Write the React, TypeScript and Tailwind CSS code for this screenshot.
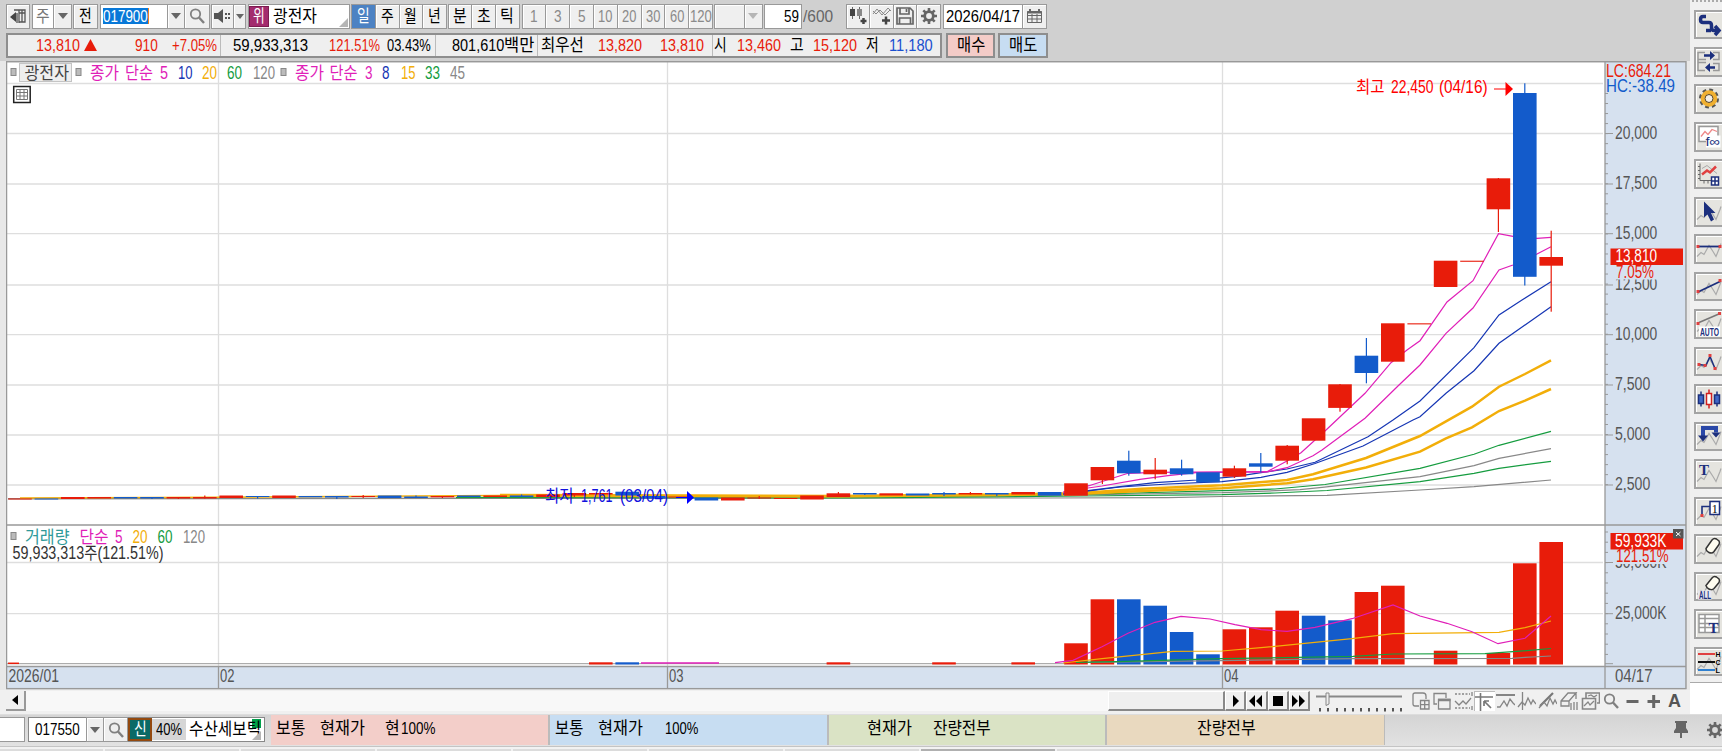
import { useLayoutEffect, useRef, type ReactNode } from "react";

const RED = "#e81c0a";
const BLUE = "#135bcb";
const MAGENTA = "#e01fb8";
const ORANGE = "#f2ae09";
const GREEN = "#159c3f";
const GRAY = "#888888";
const NAVY = "#1636b4";

/* Condenses a label to the width of the narrow HTS system font */
function Fit({ w, className = "", children }: { w: number; className?: string; children: string }) {
  const ref = useRef<HTMLSpanElement>(null);

  useLayoutEffect(() => {
    const el = ref.current;
    if (el) el.style.transform = `scaleX(${w / el.offsetWidth})`;
  }, [w, children]);

  return (
    <span className={`block shrink-0 text-[17px] leading-none ${className}`} style={{ width: w }}>
      <span ref={ref} className="inline-block origin-left whitespace-pre leading-none">
        {children}
      </span>
    </span>
  );
}

function Box({ className = "", children }: { className?: string; children?: ReactNode }) {
  return (
    <div
      className={`flex h-[25px] shrink-0 items-center justify-center overflow-hidden border border-[#999] bg-[#efefef] shadow-[inset_1px_1px_0_#fff] ${className}`}
    >
      {children}
    </div>
  );
}

function Caret({ light = false }: { light?: boolean }) {
  return (
    <svg width="10" height="6" viewBox="0 0 10 6" className="shrink-0">
      <path d="M0 0H10L5 6Z" fill={light ? "#b5b5b5" : "#666"} />
    </svg>
  );
}

function Lens() {
  return (
    <svg width="16" height="16" viewBox="0 0 16 16" fill="none" stroke="#808080" className="shrink-0">
      <circle cx="6.5" cy="6" r="4.7" strokeWidth="1.8" />
      <path d="M10 9.5L15 15" strokeWidth="2.4" />
    </svg>
  );
}

function Gear({ className = "" }: { className?: string }) {
  return (
    <svg width="16" height="16" viewBox="0 0 16 16" fill="none" stroke="#666" className={`shrink-0 ${className}`}>
      <circle cx="8" cy="8" r="4.300" strokeWidth="2.800" />
      <path d="M8 0V3M8 13V16M0 8H3M13 8H16M2.300 2.300L4.400 4.400M11.600 11.600L13.700 13.700M2.300 13.700L4.400 11.600M11.600 4.400L13.700 2.300" strokeWidth="2.600" />
    </svg>
  );
}

const periods = ["일", "주", "월", "년"];
const intraday = ["분", "초", "틱"];
const minutes = ["1", "3", "5", "10", "20", "30", "60", "120"];

function Toolbar() {
  return (
    <div className="flex h-[25px] items-center">
      <Box className="w-[24px]">
        <svg width="16" height="16" viewBox="0 0 16 16">
          <path d="M4 2H15V14H9M9 2V15M9 5H15M12 2V14" fill="none" stroke="#555" strokeWidth="1.3" />
          <path d="M6 4V14L0 9Z" fill="#444" />
          <path d="M7 5V15" stroke="#888" strokeWidth="2" />
        </svg>
      </Box>
      <Box className="ml-[2px] w-[22px] bg-white text-[#777]"><Fit w={14}>주</Fit></Box>
      <Box className="-ml-px w-[19px]"><Caret /></Box>
      <Box className="ml-px w-[25px]"><Fit w={13}>전</Fit></Box>
      <Box className="ml-[2px] w-[68px] justify-start bg-white pl-[2px]">
        <span className="flex h-[16px] items-center border-r border-[#f08020] bg-[#0878d8] text-white">
          <Fit w={45}>017900</Fit>
        </span>
      </Box>
      <Box className="-ml-px w-[18px]"><Caret /></Box>
      <Box className="-ml-px w-[26px]"><Lens /></Box>
      <Box className="ml-[1px] w-[23px]">
        <svg width="17" height="14" viewBox="0 0 17 14" fill="#555">
          <path d="M0 4H4L9 0V14L4 10H0Z" />
          <path d="M11 4h2v2h-2zM11 8h2v2h-2zM14 4h2v2h-2zM14 8h2v2h-2z" />
        </svg>
      </Box>
      <Box className="-ml-px w-[13px]">
        <svg width="8" height="5" viewBox="0 0 8 5"><path d="M0 0H8L4 5Z" fill="#666" /></svg>
      </Box>
      <Box className="relative ml-[2px] w-[102px] justify-start bg-white">
        <span className="flex h-[21px] w-[20px] shrink-0 items-center justify-center border border-[#7d1d50] bg-[#a32c6e] text-white">
          <Fit w={12}>위</Fit>
        </span>
        <Fit w={44} className="ml-[4px]">광전자</Fit>
        <svg width="9" height="9" viewBox="0 0 9 9" className="absolute right-[1px] bottom-[1px]">
          <path d="M9 0V9H0Z" fill="#b5b5b5" />
        </svg>
      </Box>
      <div className="ml-[1px] flex">
        {periods.map((p, i) => (
          <Box key={p} className={i === 0 ? "w-[25px] !bg-[#4c82c3] text-white !shadow-none" : "-ml-px w-[24.6px]"}>
            <Fit w={13}>{p}</Fit>
          </Box>
        ))}
      </div>
      <div className="ml-[1px] flex">
        {intraday.map((p) => (
          <Box key={p} className="-mr-px w-[24.6px]"><Fit w={14}>{p}</Fit></Box>
        ))}
      </div>
      <div className="ml-[3px] flex">
        {minutes.map((m) => (
          <Box key={m} className="-mr-px w-[24.8px] text-[#8a8a8a]"><Fit w={m.length * 7.2}>{m}</Fit></Box>
        ))}
      </div>
      <Box className="ml-[2px] w-[31px]" />
      <Box className="-ml-px w-[19px]"><Caret light /></Box>
      <Box className="ml-px w-[38px] justify-end bg-white pr-[2px]"><Fit w={15}>59</Fit></Box>
      <Fit w={30} className="ml-[1px] text-[#666]">/600</Fit>
      <div className="ml-[13px] flex">
        <Box className="w-[24.5px]">
          <svg width="20" height="18" viewBox="0 0 20 18">
            <path d="M4.500 0V12M11.500 0V12" stroke="#666" />
            <path d="M2 2H7V9H2Z" fill="#444" />
            <path d="M9 2H14V9H9Z" fill="#888" />
            <path d="M18.500 14H12.500M15.500 11V17" stroke="#444" strokeWidth="2.500" />
          </svg>
        </Box>
        <Box className="-ml-px w-[24.5px]">
          <svg width="20" height="18" viewBox="0 0 20 18" fill="none" stroke="#888">
            <path d="M1 7L5 2L10 8L16 1L19 4M1 4L4 7L8 3L13 8L18 3" />
            <path d="M18 13.500H10M14 9.500V17.500" stroke="#444" strokeWidth="2.500" />
          </svg>
        </Box>
        <Box className="-ml-px w-[24.5px]">
          <svg width="18" height="18" viewBox="0 0 18 18" fill="none" stroke="#666" strokeWidth="1.700">
            <path d="M1 1H14L17 4V17H1ZM4 1V7H13V1M3.500 17V11H14.500V17M10.500 2V5" />
          </svg>
        </Box>
        <Box className="-ml-px w-[24.5px]"><Gear /></Box>
      </div>
      <Box className="ml-[2px] w-[80px] bg-white"><Fit w={74}>2026/04/17</Fit></Box>
      <Box className="-ml-px w-[25px]">
        <svg width="15" height="14" viewBox="0 0 15 14" fill="none" stroke="#666">
          <path d="M.5 2.500H14.500V13.500H.5ZM.5 6.500H14.500M.5 10H14.500M5 5V13M10 5V13" />
          <path d="M0 3.500H15M3 0V3M12 0V3" strokeWidth="2" />
        </svg>
      </Box>
    </div>
  );
}

function QuoteRow() {
  return (
    <div className="mt-[4px] flex h-[25px]">
      <div className="flex w-[936px] items-center border-2 border-[#8e8e8e] bg-[#efefef] text-[#e81c0a]">
        <div className="flex h-full w-[213px] shrink-0 items-center border-r border-[#bbb]">
          <Fit w={44} className="ml-[28px]">13,810</Fit>
          <svg width="13" height="12" viewBox="0 0 13 12" className="ml-[4px]"><path d="M6.500 0L13 12H0Z" fill={RED} /></svg>
          <Fit w={22.5} className="ml-[38px]">910</Fit>
          <Fit w={45} className="ml-[14px]">+7.05%</Fit>
        </div>
        <div className="flex h-full w-[215px] shrink-0 items-center border-r border-[#bbb]">
          <Fit w={75} className="ml-[12px] text-black">59,933,313</Fit>
          <Fit w={51} className="ml-[21px]">121.51%</Fit>
          <Fit w={44} className="ml-[7px] text-black">03.43%</Fit>
        </div>
        <div className="flex h-full w-[102px] shrink-0 items-center border-r border-[#bbb] text-black">
          <Fit w={52} className="ml-[16px]">801,610</Fit>
          <Fit w={30}>백만</Fit>
        </div>
        <div className="flex h-full w-[175px] shrink-0 items-center border-r border-[#bbb]">
          <Fit w={43} className="ml-[3px] text-black">최우선</Fit>
          <Fit w={44} className="ml-[14px]">13,820</Fit>
          <Fit w={44} className="ml-[18px]">13,810</Fit>
        </div>
        <Fit w={13} className="ml-[1px] text-black">시</Fit>
        <Fit w={44} className="ml-[10px]">13,460</Fit>
        <Fit w={14} className="ml-[9px] text-black">고</Fit>
        <Fit w={44} className="ml-[9px]">15,120</Fit>
        <Fit w={13} className="ml-[9px] text-black">저</Fit>
        <Fit w={44} className="ml-[10px] text-[#1a4fd0]">11,180</Fit>
      </div>
      <div className="ml-[4px] flex w-[49px] items-center justify-center border-2 border-[#8e8e8e] bg-[#f4ccc8]"><Fit w={28}>매수</Fit></div>
      <div className="ml-[3px] flex w-[50px] items-center justify-center border-2 border-[#8e8e8e] bg-[#c7ddf2]"><Fit w={28}>매도</Fit></div>
    </div>
  );
}

/* ---------- chart ---------- */

type Candle = { up: boolean; top: number; bottom: number; high?: number; low?: number };

const c = (up: boolean, top: number, bottom: number, high?: number, low?: number): Candle => ({ up, top, bottom, high, low });

const candles: Candle[] = [
  c(true, 498.500, 499.500), c(false, 498.500, 499.500), c(true, 497, 499), c(true, 497, 498.500),
  c(false, 497, 498.500), c(false, 497, 498.500, 497, 499), c(true, 497, 498.500, 497, 499), c(true, 497, 498.500, 495.500),
  c(true, 495.500, 498), c(false, 496, 497, 496, 498.500), c(true, 495.500, 498), c(false, 496, 497.300),
  c(false, 496, 497.500, 496, 499), c(true, 496, 497, 495, 498), c(false, 495.500, 498), c(false, 496.500, 498, 495.500),
  c(true, 496, 497.300, 496, 498), c(false, 495.500, 497), c(true, 495.500, 497), c(false, 495.500, 497, 494.500),
  c(true, 494.500, 497), c(true, 493, 495.500, 493, 497), c(true, 493, 494.500), c(false, 491.700, 495.500),
  c(false, 496, 498.500), c(true, 496.500, 497.500), c(false, 497.500, 500.500), c(true, 497.500, 500.500),
  c(true, 497.500, 498.500, 496, 499), c(true, 498, 499), c(true, 495.500, 499.500), c(true, 493.300, 497, 492),
  c(false, 493, 494.500, 493, 495), c(true, 493.300, 495.500), c(false, 493.500, 495.500), c(false, 493, 494.500, 492, 496),
  c(true, 493, 494.500, 492), c(false, 493, 494.500, 493, 496), c(true, 492, 494.500), c(false, 492, 495.700),
  c(true, 483.300, 495.700), c(true, 467, 480.300, 467, 484), c(false, 460.700, 473.300, 450.700, 475.700),
  c(true, 469.700, 474.300, 458, 479.300), c(false, 468.300, 474.300, 459.700, 475.700), c(false, 472.300, 482.300),
  c(true, 468.300, 476.700, 465.700, 478), c(false, 463.300, 466.700, 453, 472.300), c(true, 445.700, 460.700, 445, 464.300),
  c(true, 418.300, 440.700), c(true, 384.300, 407.900, 384, 411.700), c(false, 355.700, 373, 338, 383.300),
  c(true, 323.300, 361.700), c(true, 323.300, 324.400), c(true, 260.700, 287), c(true, 260.700, 261.800),
  c(true, 178.300, 209.300, 178, 232), c(false, 93, 276.800, 83.300, 285.500), c(true, 257, 265.700, 230.700, 311.700),
];

const cx = (i: number) => 20 + i * 26.400;

const priceLines = [
  { color: GRAY, width: 1.200, pts: "8,499 1040,498 1168,497.700 1222,496.500 1327,495.300 1420,490 1474,486.700 1551,480" },
  { color: GREEN, width: 1.200, pts: "456,498 850,498 1080,496 1222,494.700 1275,493 1327,490.500 1420,481.700 1474,473.300 1499,468.300 1551,461.300" },
  { color: GRAY, width: 1.200, pts: "8,498.500 700,498 1080,495 1222,492.700 1300,489.700 1322,487.300 1420,476.700 1474,465.700 1499,458.300 1551,448.700" },
  { color: GREEN, width: 1.200, pts: "456,497.500 850,497 940,496.500 1080,494.500 1222,490.700 1275,489 1325,484.500 1420,468.300 1474,454.300 1499,445.300 1551,431.300" },
  { color: ORANGE, width: 1.500, pts: "20,498 220,497.300 500,495.500" },
  { color: ORANGE, width: 2.500, pts: "500,495.700 840,496.300 1000,495 1077,494 1142,491 1222,488.300 1287,483.300 1313,479.300 1366,467.500 1420,451.700 1446,438.300 1472,427.300 1499,411 1525,400.700 1551,389" },
  { color: ORANGE, width: 2.500, pts: "500,495 840,496 1000,494.500 1077,493.300 1142,488.700 1222,485.300 1287,480 1313,474.300 1366,458 1420,436 1472,406.700 1499,386.700 1525,374 1551,360.300" },
  { color: NAVY, width: 1.200, pts: "1063,494 1088,491 1120,487 1168,484 1222,481.700 1261,477.300 1287,472.300 1315,463.500 1363,446 1413,420 1420,416.700 1446,393.300 1474,370.700 1499,343.300 1551,306.700" },
  { color: NAVY, width: 1.200, pts: "1063,494 1088,490.700 1120,486.700 1155,482.700 1197,480 1235,476.700 1261,472.700 1287,469 1315,462.300 1368,436.700 1393,420 1420,401 1474,347.700 1499,315 1522,300 1551,281.700" },
  { color: MAGENTA, width: 1.200, pts: "1063,493 1088,488 1102,486 1140,479.300 1168,475.700 1196,472.700 1267,472 1287,467.700 1313,455.700 1322,450 1365,418.300 1399,385 1420,365 1446,333.300 1473,308 1499,270 1513,265 1537,254 1551,246.700" },
  { color: MAGENTA, width: 1.200, pts: "1063,492 1089,485.700 1128,473.300 1155,472.300 1267,471.700 1287,461 1301,452.700 1325,431 1365,393.300 1391,362.700 1407,350 1420,340.700 1447,302 1473,280.700 1498.500,233.700 1513,236.300 1537,238.300 1551,237.300" },
];

/* index, top of the bar, rising volume day */
const volumes: [number, number, boolean][] = [
  [22, 662.300, true], [23, 662.300, false], [31, 662.300, true], [35, 662.300, true], [38, 662.300, true],
  [40, 643.300, true], [41, 599.300, true], [42, 599.300, false], [43, 605.700, false], [44, 632, false],
  [45, 654.300, false], [46, 629.300, true], [47, 627.300, true], [48, 610.700, true], [49, 615.700, false],
  [50, 620.300, false], [51, 592, true], [52, 585.700, true], [54, 650.700, true], [56, 653, true],
  [57, 563.300, true], [58, 542, true],
];

const volumeLines = [
  { color: GRAY, pts: "1088,662.300 1222,660.700 1353,658.700 1512,658.300 1525,657.300 1551,656" },
  { color: GREEN, pts: "1076,662.300 1117,661.700 1222,658.700 1353,656.300 1393,654 1485,653.700 1513,651.700 1551,648.500" },
  { color: ORANGE, pts: "1063,663 1102,658.700 1173,651.300 1222,651 1261,647.700 1352,638.700 1393,633.700 1499,632.300 1525,627.700 1551,621" },
  { color: MAGENTA, pts: "1055,662.700 1073,660.300 1102,646.700 1128,633.300 1155,622.300 1181,616.300 1210,619 1235,624.700 1261,629.700 1287,631.300 1315,627.300 1352,618.700 1393,605 1420,616 1447,623.300 1472,631.700 1498,643.700 1525,638.300 1551,616" },
];

const priceGrid: [number, string][] = [
  [83.500, ""], [133.500, "20,000"], [184, "17,500"], [233.700, "15,000"], [285, "12,500"],
  [334.700, "10,000"], [385, "7,500"], [435, "5,000"], [485, "2,500"],
];

type Label = [number, number, number, string, string];

const labels: Label[] = [
  [24.500, 78.500, 44.500, "광전자", "#444"],
  [90, 78.500, 29, "종가", MAGENTA], [125, 78.500, 28, "단순", MAGENTA], [160, 78.500, 8, "5", MAGENTA],
  [178, 78.500, 14.500, "10", NAVY], [202, 78.500, 15, "20", ORANGE], [227, 78.500, 15, "60", GREEN], [253, 78.500, 22, "120", GRAY],
  [295, 78.500, 29, "종가", MAGENTA], [329.500, 78.500, 28, "단순", MAGENTA], [365, 78.500, 7.500, "3", MAGENTA],
  [382, 78.500, 7.500, "8", NAVY], [401, 78.500, 14.500, "15", ORANGE], [425, 78.500, 15, "33", GREEN], [450, 78.500, 15, "45", GRAY],
  [25, 542.500, 44.500, "거래량", "#2f9a9a"], [79.500, 542.500, 29, "단순", MAGENTA], [115, 542.500, 7.500, "5", MAGENTA],
  [132.500, 542.500, 15, "20", ORANGE], [157.500, 542.500, 15, "60", GREEN], [183, 542.500, 22, "120", GRAY],
  [12.500, 558.500, 151, "59,933,313주(121.51%)", "#333"],
  [1356, 92.700, 28.500, "최고", "#f00"], [1391, 92.700, 42.500, "22,450", "#f00"], [1439, 92.700, 48.500, "(04/16)", "#f00"],
  [545, 501.700, 28.500, "최저", "#11d"], [581, 501.700, 31.500, "1,761", "#11d"], [620, 501.700, 48, "(03/04)", "#11d"],
  [8.500, 681.700, 50.500, "2026/01", "#555"], [220, 681.700, 14.500, "02", "#555"], [669, 681.700, 14.500, "03", "#555"],
  [1224, 681.700, 14.500, "04", "#555"], [1615, 681.700, 37.500, "04/17", "#555"],
  [1606, 77.300, 65, "LC:684.21", RED], [1606, 92, 69, "HC:-38.49", BLUE],
  [1615.500, 262.300, 41.500, "13,810", "#fff"], [1616, 277.500, 38, "7.05%", RED],
  [1615, 547.300, 51.500, "59,933K", "#fff"], [1616, 562.300, 52.500, "121.51%", RED], [1615, 618.500, 51.500, "25,000K", "#555"],
];

function ChartText({ label: [x, y, w, text, fill] }: { label: Label }) {
  return (
    <text x={x} y={y} fill={fill} textLength={w} lengthAdjust="spacingAndGlyphs" fontSize="17.5">
      {text}
    </text>
  );
}

function Chart() {
  const minor = Array.from({ length: 40 }, (_, i) => 93.500 + i * 10.030);
  const volMinor = Array.from({ length: 13 }, (_, i) => 532 + i * 10.200);

  return (
    <svg width="1681" height="629" viewBox="6 61 1681 629" className="block">
      <rect x="6" y="61" width="1681" height="629" fill="#fff" />
      <rect x="1605" y="61" width="81" height="628" fill="#d6e1ef" />
      <rect x="6" y="666" width="1680" height="23" fill="#d6e1ef" />

      <g stroke="#dedede" strokeWidth="1.300">
        {priceGrid.map(([y]) => <path key={y} d={`M7 ${y}H1603`} />)}
        <path d="M7 562.500H1603M7 613.700H1603M218.500 62V666M667.500 62V666M1222.500 62V666" />
      </g>
      <path d="M7 663.700H1080" stroke="#999" />

      <g stroke="#999">
        {minor.map((y) => <path key={y} d={`M1605 ${y}H1608`} />)}
        {volMinor.map((y) => <path key={y} d={`M1605 ${y}H1608`} />)}
        {priceGrid.slice(1).map(([y]) => <path key={y} d={`M1605 ${y}H1613`} />)}
        <path d="M1605 562.500H1613M1605 613.700H1613M1605 663.700H1613" />
      </g>

      {priceLines.map((l, i) => (
        <polyline key={i} points={l.pts} fill="none" stroke={l.color} strokeWidth={l.width} />
      ))}
      {candles.map((d, i) => (
        <g key={i} fill={d.up ? RED : BLUE}>
          {d.high !== undefined && (
            <rect x={cx(i) - 0.600} y={d.high} width="1.200" height={(d.low ?? d.bottom) - d.high} />
          )}
          <rect x={cx(i) - 11.800} y={d.top} width="23.600" height={d.bottom - d.top} />
        </g>
      ))}

      {volumes.map(([i, y, up]) => (
        <rect key={i} x={cx(i) - 11.800} y={y} width="23.600" height={664.500 - y} fill={up ? RED : BLUE} />
      ))}
      <path d="M8 663.300H19" stroke={RED} strokeWidth="1.500" />
      <path d="M641 662.900H719" stroke={MAGENTA} strokeWidth="1.500" />
      {volumeLines.map((l, i) => (
        <polyline key={i} points={l.pts} fill="none" stroke={l.color} strokeWidth="1.200" />
      ))}

      <g stroke="#999" fill="none">
        <path d="M7 525H1686M7 666.500H1686M1605 62V689M218.500 667V689M667.500 667V689M1222.500 667V689" strokeWidth="1.300" />
        <rect x="6.500" y="61.700" width="1679.500" height="627" strokeWidth="1.500" />
      </g>

      {/* series toggles */}
      <rect x="19.500" y="63.500" width="52" height="18" fill="#eee" stroke="#c4c4c4" />
      {[[11, 68.500], [76, 68.500], [281, 68.500], [11, 532.500]].map(([x, y]) => (
        <rect key={`${x}-${y}`} x={x} y={y} width="5" height="7" fill="#bbb" stroke="#888" />
      ))}
      <rect x="13.700" y="86.500" width="16.500" height="16" fill="#fff" stroke="#222" strokeWidth="1.500" />
      <path d="M16.500 89.500H27.500V99.500H16.500ZM16.500 92.500H27.500M16.500 96H27.500M20 89V100M24 89V100" fill="none" stroke="#777" />

      {priceGrid.map(([y, text]) =>
        text ? <ChartText key={text} label={[1615, y + 5, text.length * 7.050, text, "#555"]} /> : null,
      )}
      <ChartText label={[1615, 567.500, 51.500, "50,000K", "#555"]} />
      <rect x="1614" y="264" width="70" height="15.500" fill="#d6e1ef" />
      <rect x="1614" y="549" width="70" height="15" fill="#d6e1ef" />
      <rect x="1610.500" y="248.500" width="72.500" height="16.500" fill={RED} />
      <rect x="1610.500" y="533" width="72.500" height="16.500" fill={RED} />
      <rect x="1673" y="529" width="10.500" height="9.500" fill="#555" />
      <path d="M1676 532L1680.500 536M1680.500 532L1676 536" stroke="#fff" />

      <path d="M1494 89H1506" stroke="#f00" />
      <path d="M1505.500 82L1513 89L1505.500 96Z" fill="#f00" />
      <path d="M676 497.500H688" stroke="#00f" />
      <path d="M687 491L694 497.500L687 504Z" fill="#00f" />
      {labels.map((l) => <ChartText key={`${l[0]}-${l[1]}`} label={l} />)}
    </svg>
  );
}

/* ---------- scroll strip ---------- */

const navIcons = ["M7 3L13 9L7 15Z", "M8 3V15L2 9ZM15 3V15L9 9Z", "M4 4H14V14H4Z", "M2 3L8 9L2 15ZM9 3L15 9L9 15Z"];

const toolIcons: ReactNode[] = [
  <path key="a" d="M8 14H4Q2 14 2 12V3Q2 1 4 1H12Q15 1 15 4V7M9.500 8.500H18V17H9.500ZM13.700 9V17M10 12.700H18" />,
  <g key="b"><path d="M5 12H2V1.500H14V6M6.500 7.500H18V17H6.500Z" /><path d="M6 8H18.500" strokeWidth="2.500" /></g>,
  <g key="c"><path d="M1 2H16M1 16H16" strokeDasharray="2 1.500" /><path d="M1 9L5 13L9 9L12 12L17 6M18 0V4M18 14V18" /></g>,
  <g key="d" stroke="#777"><path d="M0 4H18M5.500 0V18" strokeWidth="1.600" /><path d="M9 8H14M9 8V13M9 8L16 15" strokeWidth="1.700" /></g>,
  <g key="e"><path d="M0 3H19" strokeWidth="2" /><path d="M1 15H4L8 9L11 14L14 7L17 11L19 13" /></g>,
  <path key="f" d="M1 15L5 10L8 13L11 6L14 12L16 8L19 12M5.500 0V18" />,
  <g key="g"><path d="M2 14L15 1" strokeWidth="2.200" stroke="#777" /><path d="M1 16L6 10L9 14L12 6L15 12L17 8L19 12" /></g>,
  <path key="h" d="M1 9L8 1H16L9 9V14H1ZM1 9H9L16 1V7M11 18V11M14 18V10M17 18V10" />,
  <g key="i"><path d="M5 6V1H18.500V11H16M1.500 6.500H14.500V17H1.500Z" strokeWidth="1.600" /><path d="M3 14L7 10L9 13L13 9M7 4L10 3L13 5L16 3" /></g>,
];

function ScrollStrip() {
  return (
    <div className="flex h-[24px] items-start bg-[#f0f0f0] pl-[6px]">
      <div className="mt-px flex h-[20px] w-[20px] items-center justify-center border-r-2 border-b-2 border-[#999] bg-[#f0f0f0]">
        <svg width="6" height="10" viewBox="0 0 6 10"><path d="M6 0V10L0 5Z" /></svg>
      </div>
      <div className="mt-px h-[20px] w-[1082px] bg-[#f8f8f8]" />
      <div className="mt-px h-[20px] w-[117px] border-t border-l border-r-2 border-b-2 border-t-white border-l-white border-r-[#888] border-b-[#888] bg-[#efefef]" />
      {navIcons.map((d) => (
        <div key={d} className="mt-px flex h-[20px] w-[21.300px] shrink-0 items-center justify-center border-t border-l border-r-2 border-b-2 border-t-white border-l-white border-r-[#888] border-b-[#888] bg-[#efefef]">
          <svg width="18" height="18" viewBox="0 0 18 18"><path d={d} /></svg>
        </div>
      ))}
      <svg width="90" height="22" viewBox="0 0 90 22" className="ml-[5px] shrink-0">
        <path d="M1 6.500H87" stroke="#888" strokeWidth="2" />
        <path d="M11 3H14V14L11 15.500Z" fill="#eee" stroke="#888" />
        <path d="M5 18V21.500M13 18V21.500M22 18V21.500M30 18V21.500M38 18V21.500M46 18V21.500M54 18V21.500M62 18V21.500M70 18V21.500M78 18V21.500M86 18V21.500" stroke="#222" strokeWidth="1.500" />
      </svg>
      <div className="ml-[5px] flex h-[22px] items-center">
        {toolIcons.map((icon, i) => (
          <div key={i} className={`flex h-[20px] w-[21.200px] items-center justify-center ${i === 3 ? "border-t border-l border-[#bbb] bg-white" : ""}`}>
            <svg width="19" height="18" viewBox="0 0 19 18" fill="none" stroke="#858585" strokeWidth="1.300" className="shrink-0">
              {icon}
            </svg>
          </div>
        ))}
        <div className="flex w-[21px] justify-center"><Lens /></div>
        <svg width="21" height="18" viewBox="0 0 21 18" className="shrink-0"><path d="M4.500 9.500H16.500" stroke="#666" strokeWidth="3" /></svg>
        <svg width="21" height="18" viewBox="0 0 21 18" className="shrink-0"><path d="M4.500 9.500H17M10.700 3V16" stroke="#666" strokeWidth="3" /></svg>
        <span className="w-[21px] text-center text-[18px] leading-none font-bold text-[#555]">A</span>
      </div>
    </div>
  );
}

/* ---------- right tool rail ---------- */

const wave = <path d="M2 22L6 18L9 20L14 11L18 17L21 22L25 12L26 9" fill="none" stroke="#aaa" strokeWidth="1.200" />;
const pin = (x: number, y: number) => <rect x={x - 1.500} y={y - 1.500} width="3" height="3" fill="#e04040" />;
const tag = "fill-[#1c2f7d] font-bold";

const railIcons: ReactNode[] = [
  <path key="0" d="M11 6H8Q5.500 6 5.500 9Q5.500 12 8 12H14Q16.500 12 16.500 15V17Q16.500 20 19 20H22M20 15.500L24 20L20 24.500M16 20H11" fill="none" stroke="#1c2f7d" strokeWidth="3.500" />,
  <g key="1" fill="none" stroke="#999" strokeWidth="1.500">
    <path d="M10 5H3V12H11M3 12V23H10M3 15H11M18 5H24V12H18M18 16H24V23H18" />
    <path d="M9 8H17M20 20H12" stroke="#1c2f7d" strokeWidth="2.500" />
    <path d="M15 3.500L20 8L15 12.500ZM15 15.500L10 20L15 24.500Z" fill="#1c2f7d" stroke="none" />
  </g>,
  <g key="2" fill="none">
    <circle cx="14" cy="14" r="8.500" stroke="#555" strokeWidth="3" strokeDasharray="3.700 2.970" />
    <circle cx="14" cy="14" r="6.300" fill="#f3efe6" stroke="#f0b030" strokeWidth="4" />
    <circle cx="14" cy="14" r="4" stroke="#554020" />
  </g>,
  <g key="3">
    <path d="M4 4H23V19H4Z" fill="#fff" stroke="#999" strokeWidth="1.500" />
    <path d="M6 14L10 9L13 12L17 7L22 9" fill="none" stroke="#e88" strokeWidth="1.300" />
    <rect x="11" y="13" width="14.500" height="12" fill="#fff" />
    <text x="10.500" y="23" fontSize="13" textLength="14.500" lengthAdjust="spacingAndGlyphs" className="fill-[#1c2f7d]">f∞</text>
  </g>,
  <g key="4" fill="none">
    <path d="M5 4V21H16M3 7H5M3 11H5M3 15H5M3 19H5M9 21V24M13 21V24" stroke="#666" />
    <path d="M7 9L12 6L17 10L22 14" stroke="#aaa" />
    <path d="M7 15L12 11L15 13L21 7" stroke="#e04040" strokeWidth="2.500" />
    <path d="M16.500 17.500H23.500V25.500H16.500ZM20 17V26M16 21.500H24" fill="#fff" stroke="#1c2f7d" strokeWidth="1.500" />
  </g>,
  <g key="5">{wave}<path d="M9 4V20L12.500 17L16 24L19 22L16 15.500H20.500Z" fill="#1c2f7d" /></g>,
  <g key="6">{wave}<path d="M4 12H25" stroke="#1c2f7d" strokeWidth="1.800" />{pin(3, 12)}{pin(25, 12)}</g>,
  <g key="7">{wave}<path d="M4 19L25 9" stroke="#1c2f7d" strokeWidth="1.800" />{pin(3, 19)}{pin(25, 8)}</g>,
  <g key="8">
    {wave}<path d="M4 13L25 4" stroke="#777" strokeWidth="1.500" />{pin(3, 14)}{pin(24.500, 4)}
    <rect x="4" y="17" width="21" height="10" fill="#fff" />
    <text x="5" y="26" fontSize="11.500" textLength="19" lengthAdjust="spacingAndGlyphs" className={tag}>AUTO</text>
  </g>,
  <g key="9">
    {wave}<path d="M4 17L11 18L15 9L20 21" fill="none" stroke="#1c2f7d" strokeWidth="1.500" />
    {pin(4, 17)}{pin(10, 18)}{pin(15, 8)}{pin(20, 21)}
  </g>,
  <g key="10" strokeWidth="1.500">
    <path d="M6 7V22M22 7V22" stroke="#1c2f7d" />
    <path d="M3.500 10.500H8.500V19H3.500ZM19.500 10.500H24.500V19H19.500Z" fill="#4068c8" stroke="#1c2f7d" />
    <path d="M14 5V24" stroke="#d02020" />
    <path d="M11.500 9H16.500V20H11.500Z" fill="#fff" stroke="#d02020" />
  </g>,
  <g key="11">{wave}<path d="M8 14V5.500H21V10" fill="none" stroke="#2a48a8" strokeWidth="4" /><path d="M3 13H13L8 19ZM16.500 10H25.500L21 15Z" fill="#1c2f7d" /></g>,
  <g key="12">{wave}<text x="4" y="15" fontSize="15" className={`${tag} font-['Liberation_Serif']`}>T</text></g>,
  <g key="13">{wave}<path d="M7 18V9H15" fill="none" stroke="#1c2f7d" strokeWidth="1.600" />{pin(7, 18)}<path d="M15 4H24.500V17H15Z" fill="#fff" stroke="#1c2f7d" strokeWidth="1.500" /><text x="16.800" y="15" fontSize="12" className="fill-black font-['Liberation_Serif']">1</text></g>,
  <g key="14">{wave}<path d="M11 14L17 5.500Q19 3 21.500 4.500L24 6.500Q25 8 24 10L19 17Q17 19.500 14 18L12 16.500Q11 15.500 11 14Z" fill="#fffdf0" stroke="#333" strokeWidth="1.500" /></g>,
  <g key="15">
    {wave}<path d="M11 13L17 5.500Q19 3 21.500 4.500L24 6.500Q25 8 24 10L19 16Q17 18 14 16.500L12 15Z" fill="#fffdf0" stroke="#333" strokeWidth="1.500" />
    <rect x="3" y="18" width="13.500" height="9" fill="#e8e8f0" />
    <text x="4" y="26" fontSize="11" textLength="12" lengthAdjust="spacingAndGlyphs" className={tag}>ALL</text>
  </g>,
  <g key="16">
    <path d="M4 5H24V23H4ZM4 9H24M4 14H24M4 18H24M10 5V23" fill="#fff" stroke="#999" strokeWidth="1.500" />
    <text x="13.500" y="23" fontSize="15" className={`${tag} font-['Liberation_Serif']`}>T</text>
  </g>,
  <g key="17">
    {wave}<path d="M3 6.500H20" stroke="#e04040" strokeWidth="2" /><path d="M3 14.500H20" stroke="#111" strokeWidth="2" /><path d="M3 22.500H20" stroke="#3080d0" strokeWidth="2" />
    <g fontSize="8" className="font-bold">
      <text x="20.500" y="9" textLength="5" lengthAdjust="spacingAndGlyphs">H</text>
      <text x="20.500" y="17.500" textLength="5" lengthAdjust="spacingAndGlyphs">C</text>
      <text x="20.500" y="25.500" textLength="4.500" lengthAdjust="spacingAndGlyphs">L</text>
    </g>
  </g>,
];

function ToolRail() {
  return (
    <div className="flex h-[714px] w-[32px] shrink-0 flex-col overflow-hidden bg-[#f0f0f0]">
      <div className="ml-[2px] h-[2px] border-t-2 border-dotted border-[#aaa]" />
      <div className="mt-[7.500px] ml-[4px] flex h-[672.500px] flex-col gap-[7.900px]">
        {railIcons.map((icon, i) => (
          <div key={i} className="h-[29.600px] w-[28px] shrink-0 border-2 border-r-0 border-[#a4a4a4] bg-[#e5e4df] shadow-[inset_1px_1px_0_#fff]">
            <svg width="26" height="26" viewBox="1 1.500 26 26">{icon}</svg>
          </div>
        ))}
      </div>
      <div className="flex-1 border-t border-[#aaa] bg-white" />
    </div>
  );
}

/* ---------- order bar ---------- */

function OrderBar() {
  return (
    <div className="flex h-[32px] items-start border-t border-[#ddd] bg-gradient-to-b from-[#d4d4d4] to-[#e2e2e2]">
      <Box className="mt-[2px] w-[25px] border-l-0 bg-white" />
      <div className="mt-[2px] ml-[3px] flex h-[25px] w-[237px] items-center border border-[#888] bg-white">
        <div className="flex w-[57px] shrink-0 justify-center"><Fit w={45}>017550</Fit></div>
        <Box className="w-[18px]"><Caret /></Box>
        <Box className="-ml-px w-[25px]"><Lens /></Box>
        <span className="flex h-[23px] w-[24px] shrink-0 items-center justify-center border-2 border-[#93490f] bg-[#0a6a66] text-white"><Fit w={13}>신</Fit></span>
        <span className="flex h-[21px] w-[34px] shrink-0 items-center justify-center bg-[#d6d6d6]"><Fit w={26}>40%</Fit></span>
        <span className="relative flex h-[21px] w-[77px] items-center">
          <span className="absolute top-0 right-[2px] size-[9px] bg-[#00a04a]" />
          <Fit w={72} className="relative ml-[3px]">수산세보틱</Fit>
          <svg width="9" height="9" viewBox="0 0 9 9" className="absolute right-[2px] bottom-0"><path d="M9 0V9H0Z" fill="#b5b5b5" /></svg>
        </span>
      </div>
      <div className="ml-[6px] flex h-[30px] w-[279px] items-center border-r-2 border-[#bbb] bg-[#f3cec9] pb-[4px] pl-[5px]">
        <Fit w={29}>보통</Fit>
        <Fit w={45} className="ml-[15px]">현재가</Fit>
        <Fit w={15} className="ml-[20px]">현</Fit>
        <Fit w={34} className="ml-[1px]">100%</Fit>
      </div>
      <div className="flex h-[30px] w-[279px] items-center border-r-2 border-[#bbb] bg-[#c7ddf2] pb-[4px] pl-[5px]">
        <Fit w={28}>보통</Fit>
        <Fit w={45} className="ml-[15px]">현재가</Fit>
        <Fit w={33} className="ml-[22px]">100%</Fit>
      </div>
      <div className="flex h-[30px] w-[278px] items-center border-r-2 border-[#bbb] bg-[#dae3c5] pb-[4px] pl-[38px]">
        <Fit w={45}>현재가</Fit>
        <Fit w={58} className="ml-[21px]">잔량전부</Fit>
      </div>
      <div className="flex h-[30px] w-[278px] items-center border-r border-[#bbb] bg-[#e9d9bf] pb-[4px] pl-[90px]">
        <Fit w={59}>잔량전부</Fit>
      </div>
      <div className="flex h-[30px] flex-1 items-center justify-end">
        <svg width="14" height="18" viewBox="0 0 14 18" fill="#666"><path d="M1 0H13V2H12V7L14 10V12H8V17H6V12H0V10L2 7V2H1Z" /></svg>
        <Gear className="mr-[-1px] ml-[19px]" />
      </div>
    </div>
  );
}

export default function App() {
  return (
    <div className="flex h-[751px] w-[1722px] flex-col overflow-hidden bg-[#e4e4e4] font-['Liberation_Sans','Noto_Sans_CJK_KR',sans-serif] text-black">
      <div className="flex h-[714px]">
        <div className="flex w-[1690px] shrink-0 flex-col">
          <div className="h-[61px] bg-[#d0d0d0] pt-[3.500px] pl-[6px]">
            <Toolbar />
            <QuoteRow />
          </div>
          <div className="bg-[#e8e8e8] pl-[6px]"><Chart /></div>
          <ScrollStrip />
        </div>
        <ToolRail />
      </div>
      <OrderBar />
      <div className="flex h-[5px] gap-[2px] border-t border-[#c4c4c4] bg-[#f2f2f2] pt-[2px]">
        <div className="w-[103px] bg-[#dcdcdc]" />
        <div className="w-[134px] bg-[#dcdcdc]" />
        <div className="w-[134px] bg-[#dcdcdc]" />
        <div className="w-[134px] bg-[#dcdcdc]" />
        <div className="w-[134px] bg-[#dcdcdc]" />
        <div className="w-[134px] bg-[#dcdcdc]" />
        <div className="w-[134px] bg-[#dcdcdc]" />
        <div className="w-[134px] bg-[#b0b0b0]" />
        <div className="flex-1 bg-[#dcdcdc]" />
      </div>
    </div>
  );
}
